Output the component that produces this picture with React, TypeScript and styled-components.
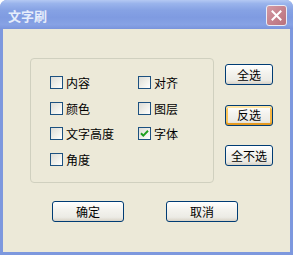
import React from "react";
import styled, { createGlobalStyle, css } from "styled-components";

const Global = createGlobalStyle`
  html, body { margin: 0; padding: 0; background: #ffffff; }
  body { font-family: "Noto Sans CJK SC", "Noto Sans", sans-serif; }
`;

const Window = styled.div`
  width: 293px;
  height: 255px;
  display: flex;
  flex-direction: column;
  border-radius: 7px 7px 0 0;
  overflow: hidden;
  background: #7d98de;
`;

const TitleBar = styled.div`
  height: 29px;
  flex: none;
  display: flex;
  align-items: center;
  justify-content: space-between;
  padding: 0 6px 0 8px;
  background: linear-gradient(
    180deg,
    #b4c9f3 0%,
    #9ab4ec 12%,
    #86a2e4 35%,
    #7f9be1 60%,
    #87a2e5 85%,
    #7a94dc 100%
  );
`;

const Title = styled.span`
  font-family: "Noto Sans CJK SC", sans-serif;
  font-size: 13px;
  font-weight: 700;
  color: #e6edfb;
  letter-spacing: 0px;
  line-height: 1;
  margin-top: 1px;
`;

const CloseButton = styled.div`
  width: 19px;
  height: 19px;
  border: 1px solid #e9ecf6;
  border-radius: 3px;
  background: linear-gradient(135deg, #d39aa4 0%, #c6838e 50%, #b8717d 100%);
  display: flex;
  align-items: center;
  justify-content: center;
  margin-top: 1px;
`;

const Body = styled.div`
  flex: 1;
  margin: 0 3px 3px 3px;
  background: #ece9d8;
  padding: 29px 0 0 27px;
  display: flex;
  flex-direction: column;
`;

const TopRow = styled.div`
  display: flex;
  align-items: flex-start;
`;

const GroupBox = styled.div`
  width: 184px;
  height: 125px;
  box-sizing: border-box;
  border: 1px solid #d0d0bf;
  border-radius: 4px;
  padding: 17px 0 0 19px;
`;

const CheckGrid = styled.div`
  display: grid;
  grid-template-columns: 88px auto;
  grid-auto-rows: 13px;
  row-gap: 12.67px;
`;

const CheckItem = styled.label`
  display: flex;
  align-items: center;
  gap: 3px;
  height: 13px;
  font-size: 12px;
  color: #000;
  white-space: nowrap;
`;

const Box = styled.span`
  width: 13px;
  height: 13px;
  box-sizing: border-box;
  border: 1px solid #1c5180;
  background: linear-gradient(135deg, #dcdcd7 0%, #f0f0ea 55%, #ffffff 100%);
  display: flex;
  align-items: center;
  justify-content: center;
  flex: none;
`;

const ButtonColumn = styled.div`
  display: flex;
  flex-direction: column;
  gap: 19.5px;
  margin-left: 11px;
  padding-top: 6px;
`;

const BottomRow = styled.div`
  display: flex;
  gap: 42px;
  margin-top: 18px;
  padding-left: 22px;
`;

const Button = styled.div<{ $w: number; $hot?: boolean }>`
  width: ${(p) => p.$w}px;
  height: 21px;
  box-sizing: border-box;
  border: 1px solid #003c74;
  border-radius: 3px;
  background: linear-gradient(180deg, #ffffff 0%, #f4f3ee 40%, #ecebe5 80%, #d8d2c6 100%);
  display: flex;
  align-items: center;
  justify-content: center;
  font-size: 12px;
  color: #000;
  line-height: 1;
  ${(p) =>
    p.$hot &&
    css`
      box-shadow: inset 0 2px 0 #ffe5a3, inset 0 -2px 0 #e59a21, inset 2px 0 0 #fbc55a,
        inset -2px 0 0 #f5b544;
    `}
`;

const Check = () => (
  <svg width="9" height="9" viewBox="0 0 9 9">
    <path d="M1 4.2 L3.3 6.6 L8 1.8" fill="none" stroke="#21a121" strokeWidth="2" />
  </svg>
);

const items: { label: string; checked?: boolean }[] = [
  { label: "内容" },
  { label: "对齐" },
  { label: "颜色" },
  { label: "图层" },
  { label: "文字高度" },
  { label: "字体", checked: true },
  { label: "角度" },
];

export default function App() {
  return (
    <>
      <Global />
      <Window>
        <TitleBar>
          <Title>文字刷</Title>
          <CloseButton>
            <svg width="11" height="11" viewBox="0 0 11 11">
              <path d="M1.5 1.5 L9.5 9.5 M9.5 1.5 L1.5 9.5" stroke="#ffffff" strokeWidth="2" strokeLinecap="square" />
            </svg>
          </CloseButton>
        </TitleBar>
        <Body>
          <TopRow>
            <GroupBox>
              <CheckGrid>
                {items.map((it) => (
                  <CheckItem key={it.label}>
                    <Box>{it.checked && <Check />}</Box>
                    {it.label}
                  </CheckItem>
                ))}
              </CheckGrid>
            </GroupBox>
            <ButtonColumn>
              <Button $w={48}>全选</Button>
              <Button $w={48} $hot>
                反选
              </Button>
              <Button $w={48}>全不选</Button>
            </ButtonColumn>
          </TopRow>
          <BottomRow>
            <Button $w={72}>确定</Button>
            <Button $w={72}>取消</Button>
          </BottomRow>
        </Body>
      </Window>
    </>
  );
}
